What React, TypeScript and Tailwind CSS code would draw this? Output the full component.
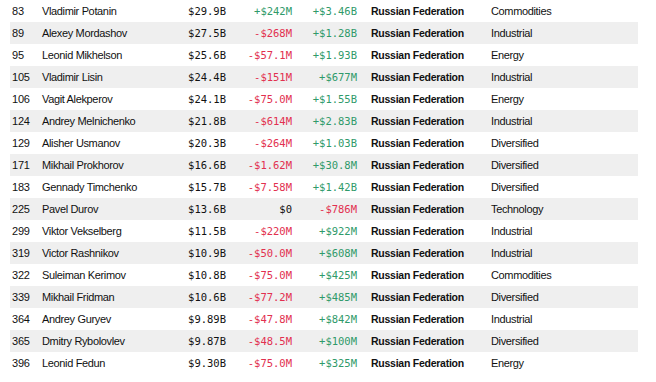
const rows: [string, string, string, string, string, string][] = [
  ["83", "Vladimir Potanin", "$29.9B", "+$242M", "+$3.46B", "Commodities"],
  ["89", "Alexey Mordashov", "$27.5B", "-$268M", "+$1.28B", "Industrial"],
  ["95", "Leonid Mikhelson", "$25.6B", "-$57.1M", "+$1.93B", "Energy"],
  ["105", "Vladimir Lisin", "$24.4B", "-$151M", "+$677M", "Industrial"],
  ["106", "Vagit Alekperov", "$24.1B", "-$75.0M", "+$1.55B", "Energy"],
  ["124", "Andrey Melnichenko", "$21.8B", "-$614M", "+$2.83B", "Industrial"],
  ["129", "Alisher Usmanov", "$20.3B", "-$264M", "+$1.03B", "Diversified"],
  ["171", "Mikhail Prokhorov", "$16.6B", "-$1.62M", "+$30.8M", "Diversified"],
  ["183", "Gennady Timchenko", "$15.7B", "-$7.58M", "+$1.42B", "Diversified"],
  ["225", "Pavel Durov", "$13.6B", "$0", "-$786M", "Technology"],
  ["299", "Viktor Vekselberg", "$11.5B", "-$220M", "+$922M", "Industrial"],
  ["319", "Victor Rashnikov", "$10.9B", "-$50.0M", "+$608M", "Industrial"],
  ["322", "Suleiman Kerimov", "$10.8B", "-$75.0M", "+$425M", "Commodities"],
  ["339", "Mikhail Fridman", "$10.6B", "-$77.2M", "+$485M", "Diversified"],
  ["364", "Andrey Guryev", "$9.89B", "-$47.8M", "+$842M", "Industrial"],
  ["365", "Dmitry Rybolovlev", "$9.87B", "-$48.5M", "+$100M", "Diversified"],
  ["396", "Leonid Fedun", "$9.30B", "-$75.0M", "+$325M", "Energy"],
];

// green for gains, red for losses
const tone = (v: string) =>
  v.startsWith("+") ? "text-[#2f9a6a]" : v.startsWith("-") ? "text-[#e2304f]" : "text-[#111]";

const mono = { fontFamily: "'DejaVu Sans Mono', monospace" };

export default function App() {
  return (
    <div className="w-[656px] h-[382px] bg-white overflow-hidden" style={{ fontFamily: "'Liberation Sans', Arial, sans-serif" }}>
      <div className="ml-[10px] w-[628px] text-[11px] text-[#111]">
        {rows.map((r, i) => (
          <div key={r[0]} className={`flex items-center h-[22px] pt-[1px] whitespace-nowrap ${i % 2 === 1 ? "bg-[#efefef]" : "bg-white"}`}>
            <div className="w-[32px] shrink-0 pl-[2px] tracking-[-0.2px]">{r[0]}</div>
            <div className="w-[132px] shrink-0 tracking-[-0.35px]">{r[1]}</div>
            <div className="w-[52px] shrink-0 text-right text-[10.5px]" style={mono}>{r[2]}</div>
            <div className={`w-[66px] shrink-0 text-right text-[10.5px] ${tone(r[3])}`} style={mono}>{r[3]}</div>
            <div className={`w-[65px] shrink-0 text-right text-[10.5px] ${tone(r[4])}`} style={mono}>{r[4]}</div>
            <div className="w-[134px] shrink-0 pl-[14px] text-[10.5px] font-bold tracking-[-0.25px]">Russian Federation</div>
            <div className="flex-1 tracking-[-0.35px]">{r[5]}</div>
          </div>
        ))}
      </div>
    </div>
  );
}
